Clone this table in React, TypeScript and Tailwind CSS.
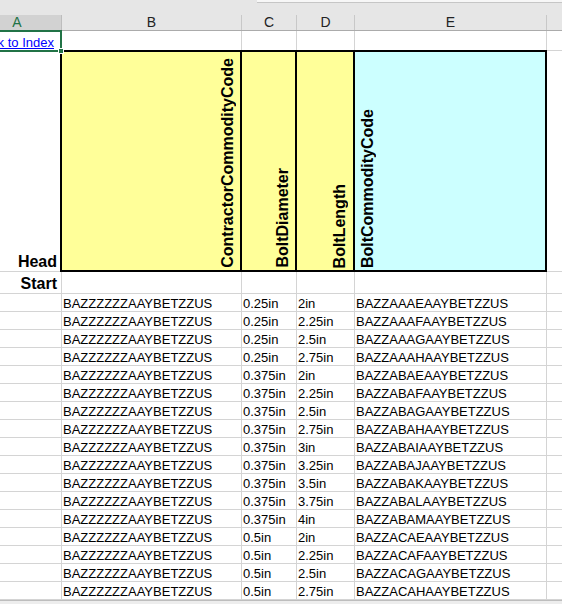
import React from 'react';

const rows: [string, string, string][] = [
  ['0.25in', '2in', 'BAZZAAAEAAYBETZZUS'],
  ['0.25in', '2.25in', 'BAZZAAAFAAYBETZZUS'],
  ['0.25in', '2.5in', 'BAZZAAAGAAYBETZZUS'],
  ['0.25in', '2.75in', 'BAZZAAAHAAYBETZZUS'],
  ['0.375in', '2in', 'BAZZABAEAAYBETZZUS'],
  ['0.375in', '2.25in', 'BAZZABAFAAYBETZZUS'],
  ['0.375in', '2.5in', 'BAZZABAGAAYBETZZUS'],
  ['0.375in', '2.75in', 'BAZZABAHAAYBETZZUS'],
  ['0.375in', '3in', 'BAZZABAIAAYBETZZUS'],
  ['0.375in', '3.25in', 'BAZZABAJAAYBETZZUS'],
  ['0.375in', '3.5in', 'BAZZABAKAAYBETZZUS'],
  ['0.375in', '3.75in', 'BAZZABALAAYBETZZUS'],
  ['0.375in', '4in', 'BAZZABAMAAYBETZZUS'],
  ['0.5in', '2in', 'BAZZACAEAAYBETZZUS'],
  ['0.5in', '2.25in', 'BAZZACAFAAYBETZZUS'],
  ['0.5in', '2.5in', 'BAZZACAGAAYBETZZUS'],
  ['0.5in', '2.75in', 'BAZZACAHAAYBETZZUS'],
];

const grid = 'shrink-0 h-full border-r border-[#d4d4d4]';
const dataText = 'pl-px pt-[2px] text-[13px] leading-[16px] whitespace-nowrap overflow-hidden';
const vertical = '[writing-mode:vertical-rl] rotate-180 font-bold text-[16px] leading-[18px] whitespace-nowrap';

const App: React.FC = () => {
  return (
    <div className="relative w-[562px] h-[604px] overflow-hidden bg-white text-black font-['Liberation_Sans',Arial,sans-serif]">
      {/* Formula bar edge */}
      <div className="h-[15px] bg-[#e6e6e6] flex justify-end">
        <div className="w-[305px] h-[3px] bg-[#f7f7f7] border-b border-[#c6c6c6]" />
      </div>

      {/* Column headers */}
      <div className="flex h-[16px] bg-[#e6e6e6] border-b border-[#ababab] text-[14px] leading-[15px] text-[#222]">
        <div className="w-[62px] shrink-0 h-full bg-[#d2d2d2] border-r border-[#bdbdbd]">
          <div className="w-[34px] text-center text-[#217346]">A</div>
        </div>
        <div className="w-[180px] shrink-0 h-full border-r border-[#c8c8c8] text-center">B</div>
        <div className="w-[55px] shrink-0 h-full border-r border-[#c8c8c8] text-center">C</div>
        <div className="w-[58px] shrink-0 h-full border-r border-[#c8c8c8] text-center">D</div>
        <div className="w-[192px] shrink-0 h-full border-r border-[#c8c8c8] text-center">E</div>
        <div className="flex-1" />
      </div>

      {/* Row 1 */}
      <div className="flex h-[19px]">
        <div className={`w-[62px] ${grid} flex items-end justify-end pr-[7px] overflow-hidden`}>
          <span className="text-[13px] leading-[15px] text-[#0000ff] underline whitespace-nowrap">
            Back to Index
          </span>
        </div>
        <div className={`w-[180px] ${grid}`} />
        <div className={`w-[55px] ${grid}`} />
        <div className={`w-[58px] ${grid}`} />
        <div className={`w-[192px] ${grid}`} />
        <div className="flex-1" />
      </div>

      {/* Row 2: rotated field headers */}
      <div className="flex h-[222px]">
        <div className="w-[60px] shrink-0 h-full border-b border-[#d4d4d4] flex items-end justify-end pr-[3px]">
          <span className="font-bold text-[16px] leading-[18px]">Head</span>
        </div>
        <div className="w-[487px] shrink-0 h-full flex border-2 border-black">
          <div className="w-[180px] shrink-0 h-full bg-[#ffff99] border-r-2 border-black flex items-end justify-end pr-[3px] pb-[2px]">
            <span className={vertical}>ContractorCommodityCode</span>
          </div>
          <div className="w-[55px] shrink-0 h-full bg-[#ffff99] border-r-2 border-black flex items-end justify-end pr-[3px] pb-[2px]">
            <span className={vertical}>BoltDiameter</span>
          </div>
          <div className="w-[58px] shrink-0 h-full bg-[#ffff99] border-r-2 border-black flex items-end justify-end pr-[4px] pb-[2px]">
            <span className={vertical}>BoltLength</span>
          </div>
          <div className="w-[190px] shrink-0 h-full bg-[#ccffff] flex items-end justify-start pl-[4px] pb-[2px]">
            <span className={vertical}>BoltCommodityCode</span>
          </div>
        </div>
        <div className="flex-1 h-full border-t border-b border-[#d4d4d4]" />
      </div>

      {/* Row 3: Start */}
      <div className="flex h-[22px] border-b border-[#d4d4d4]">
        <div className={`w-[62px] ${grid} flex items-end justify-end pr-[4px]`}>
          <span className="font-bold text-[16px] leading-[18px]">Start</span>
        </div>
        <div className={`w-[180px] ${grid}`} />
        <div className={`w-[55px] ${grid}`} />
        <div className={`w-[58px] ${grid}`} />
        <div className={`w-[192px] ${grid}`} />
        <div className="flex-1" />
      </div>

      {/* Data rows */}
      {rows.map(([dia, len, code], i) => (
        <div key={i} className="flex h-[18px] border-b border-[#d4d4d4]">
          <div className={`w-[62px] ${grid}`} />
          <div className={`w-[180px] ${grid} ${dataText}`}>BAZZZZZZAAYBETZZUS</div>
          <div className={`w-[55px] ${grid} ${dataText}`}>{dia}</div>
          <div className={`w-[58px] ${grid} ${dataText}`}>{len}</div>
          <div className={`w-[192px] ${grid} ${dataText}`}>{code}</div>
          <div className="flex-1" />
        </div>
      ))}

      {/* Bottom edge */}
      <div className="h-[4px] bg-[#ededed] border-t border-[#bdbdbd]" />

      {/* Active cell selection */}
      <div className="absolute left-[-2px] top-[30px] w-[64px] h-[22px] border-2 border-[#217346]" />
      <div className="absolute left-[58px] top-[48px] w-[6px] h-[6px] bg-[#217346] border border-white" />
    </div>
  );
};

export default App;
